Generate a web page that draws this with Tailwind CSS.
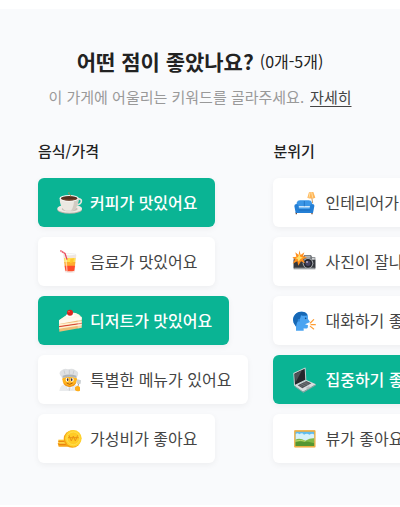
<!DOCTYPE html>
<html lang="ko">
<head>
<meta charset="utf-8">
<meta name="viewport" content="width=device-width, initial-scale=1">
<title>어떤 점이 좋았나요?</title>
<script src="https://cdn.jsdelivr.net/npm/@tailwindcss/browser@4"></script>
</head>
<body class="bg-white font-['Noto_Sans_CJK_KR',sans-serif] text-[#222]">
<main class="mt-[9px] overflow-hidden bg-[#f9fafc] pt-9 pb-[42px]">
  <header class="text-center whitespace-nowrap">
    <h1 class="flex items-center justify-center gap-[6px] text-[21px] leading-8 font-bold">어떤 점이 좋았나요? <span class="text-base font-normal">(0개-5개)</span></h1>
    <p class="mt-1 flex items-center justify-center gap-[6px] text-[15px] leading-8 text-[#999]">이 가게에 어울리는 키워드를 골라주세요. <a href="#" class="text-[#444] underline underline-offset-3">자세히</a></p>
  </header>
  <div class="mt-6 ml-[38px] flex gap-[25px] whitespace-nowrap">
    <section class="shrink-0" aria-labelledby="food">
      <h2 id="food" class="text-[15px] leading-7 font-medium">음식/가격</h2>
      <ul class="mt-[13px] flex flex-col items-start gap-[10px]">
        <li><button type="button" aria-pressed="true" class="flex h-[49px] items-center gap-[7px] rounded-md bg-[#0ab494] pr-[17px] pl-[19px] text-base font-medium text-white shadow-[0_2px_6px_rgba(0,0,0,0.05)]">
          <svg class="size-[26px]" viewBox="0 0 78 78" aria-hidden="true"><ellipse cx="38" cy="59" rx="37" ry="12" fill="#b9b1a7"/><ellipse cx="38" cy="56" rx="37" ry="12" fill="#eeeae4"/><ellipse cx="38" cy="57" rx="24" ry="7" fill="#c9c1b7"/><path d="M60 28c18-7 18 15-2 17" fill="none" stroke="#e8e4de" stroke-width="5"/><path d="M8 25c0 18 7 33 18 37h21c11-5 18-20 18-37z" fill="#ece8e2"/><path d="M51 31c0 13-3 23-9 31h5c11-5 18-20 18-37z" fill="#d2cbc2"/><ellipse cx="36.500" cy="25" rx="29" ry="10" fill="#f9f7f4"/><ellipse cx="36.500" cy="25" rx="25" ry="7" fill="#53301f"/><path d="M18 27c9 4 27 4 37 0" stroke="#8a5437" stroke-width="2" fill="none"/><path d="M41 19c2-5-9-6-5-12" stroke="#bc863f" stroke-width="3" fill="none"/></svg>
          <span class="pb-[2px]">커피가 맛있어요</span></button></li>
        <li><button type="button" aria-pressed="false" class="flex h-[49px] items-center gap-[7px] rounded-md bg-white pr-[17px] pl-[19px] text-base text-[#444] shadow-[0_2px_6px_rgba(0,0,0,0.05)]">
          <svg class="size-[26px]" viewBox="0 0 78 78" aria-hidden="true"><path d="M19 17h39l-5 53q-14 4-29 0z" fill="#f3e5df"/><path d="M21 27h35l-2 16H23z" fill="#ffe052"/><path d="M22 39h33l-2 16H24z" fill="#ffac2f"/><path d="M23 50h31l-2 15q-13 3-27 0z" fill="#ff4c2b"/><path d="M26 21l4 45" stroke="#fff" stroke-opacity=".55" stroke-width="4"/><path d="M40 30l11-2-2 11-10 4z" fill="#ffc72e"/><ellipse cx="38" cy="17" rx="19" ry="3" fill="#fff" stroke="#dedede" stroke-width="1.500"/><path d="M10 5l14 8 6 19" fill="none" stroke="#e9475a" stroke-width="4"/><path d="M15 5l-2 5m8 0l-3 4" stroke="#ffd0d4" stroke-width="2"/></svg>
          <span class="pb-[2px]">음료가 맛있어요</span></button></li>
        <li><button type="button" aria-pressed="true" class="flex h-[49px] items-center gap-[7px] rounded-md bg-[#0ab494] pr-[17px] pl-[19px] text-base font-medium text-white shadow-[0_2px_6px_rgba(0,0,0,0.05)]">
          <svg class="size-[26px]" viewBox="0 0 78 78" aria-hidden="true"><path d="M6 37l32-22q27-4 36 16v28L7 71z" fill="#eebf77"/><path d="M6 37l32-22q27-4 36 16L6 46z" fill="#fff6e9"/><path d="M6 38l68-12v9L6 48z" fill="#fffaf0"/><path d="M6 53l68-10v5L6 59z" fill="#d84b38"/><path d="M6 49l68-9v4L6 54zM6 58l68-10v4L6 62z" fill="#fff1d2"/><path d="M62 30l12-4v33l-12 3z" fill="#fff" fill-opacity=".3"/><ellipse cx="40" cy="22" rx="13" ry="5" fill="#fff"/><circle cx="39" cy="14" r="9" fill="#dc251f"/><circle cx="36" cy="11" r="2" fill="#ff877d"/></svg>
          <span class="pb-[2px]">디저트가 맛있어요</span></button></li>
        <li><button type="button" aria-pressed="false" class="flex h-[49px] items-center gap-[7px] rounded-md bg-white pr-[17px] pl-[19px] text-base text-[#444] shadow-[0_2px_6px_rgba(0,0,0,0.05)]">
          <svg class="size-[26px]" viewBox="0 0 78 78" aria-hidden="true"><path d="M7 72q2-20 20-21h22q16 3 18 21z" fill="#e9ebed"/><path d="M37 57v14" stroke="#b5babd" stroke-width="2"/><circle cx="38" cy="37" r="22" fill="#ffb51f"/><path d="M18 46q20 20 40 0-5 14-20 14T18 46" fill="#f39314"/><path d="M14 30Q1 18 14 10q8-8 19-3 13-5 21 2 16 6 6 21v4q-23-8-45 0z" fill="#dfe1e3"/><path d="M17 26q21-7 41 0v7q-20-7-41 0z" fill="#aeb3b7"/><path d="M21 10l3 12m13-13v12m14-11l-3 12" stroke="#bfc3c6" stroke-width="2"/><ellipse cx="31" cy="38" rx="5" ry="6" fill="#fff"/><ellipse cx="45" cy="38" rx="5" ry="6" fill="#fff"/><ellipse cx="32" cy="38" rx="2.500" ry="4" fill="#422f21"/><ellipse cx="44" cy="38" rx="2.500" ry="4" fill="#422f21"/><path d="M29 48q9 8 18 0" fill="none" stroke="#9c4c10" stroke-width="2.500"/><path d="M28 58l10 4 9-4-1 9-8-4-8 4z" fill="#fff" stroke="#c9cdd0"/><path d="M62 60l5-15" stroke="#9ba1a5" stroke-width="3"/><path d="M61 37l11 3-1 10-10 2-3-7z" fill="#cbd0d3"/><path d="M54 61q9-8 15 0v10q-9 4-15-2z" fill="#ffae1b"/></svg>
          <span class="pb-[2px]">특별한 메뉴가 있어요</span></button></li>
        <li><button type="button" aria-pressed="false" class="flex h-[49px] items-center gap-[7px] rounded-md bg-white pr-[17px] pl-[19px] text-base text-[#444] shadow-[0_2px_6px_rgba(0,0,0,0.05)]">
          <svg class="size-[26px]" viewBox="0 0 78 78" aria-hidden="true"><path d="M4 41h28v10H4z" fill="#ffc52c"/><path d="M2 51h33v11H5z" fill="#f7a51a"/><path d="M4 46h24M5 55h26" stroke="#e77d0d" stroke-width="3"/><path d="M7 51h24" stroke="#ffe265" stroke-width="3"/><circle cx="46" cy="39" r="26" fill="#f5a313"/><circle cx="49" cy="37" r="25" fill="#ffd22e"/><circle cx="49" cy="37" r="19" fill="#ffcb25" stroke="#ffe463" stroke-width="2"/><path d="M36 28l7 17 6-15 6 15 7-17M33 35h32" fill="none" stroke="#eb9516" stroke-width="3"/></svg>
          <span class="pb-[2px]">가성비가 좋아요</span></button></li>
      </ul>
    </section>
    <section class="shrink-0" aria-labelledby="mood">
      <h2 id="mood" class="text-[15px] leading-7 font-medium">분위기</h2>
      <ul class="mt-[13px] flex flex-col items-start gap-[10px]">
        <li><button type="button" aria-pressed="false" class="flex h-[49px] items-center gap-[7px] rounded-md bg-white pr-[17px] pl-[19px] text-base text-[#444] shadow-[0_2px_6px_rgba(0,0,0,0.05)]">
          <svg class="size-[26px]" viewBox="0 0 78 78" aria-hidden="true"><path d="M59 20l3 20" stroke="#c69b68" stroke-width="3"/><path d="M51 7l13-1 6 17q-12 5-24 0z" fill="#ffb457"/><path d="M54 8l-3 15m8-16l3 16" stroke="#ffe1a2" stroke-width="3"/><path d="M13 66v7m47-7v7" stroke="#744b34" stroke-width="4"/><path d="M14 49V38q2-7 10-7h26q8 0 10 7v11z" fill="#3a96e7"/><path d="M20 52h35v10H20z" fill="#53a9ef"/><path d="M7 48q0-6 7-6 7 1 7 14h32q0-13 7-14 8 0 7 7l-4 20H11z" fill="#247fd5"/><path d="M20 60h35M37 33v16" stroke="#1767b5" stroke-width="2"/></svg>
          <span class="pb-[2px]">인테리어가 멋져요</span></button></li>
        <li><button type="button" aria-pressed="false" class="flex h-[49px] items-center gap-[7px] rounded-md bg-white pr-[17px] pl-[19px] text-base text-[#444] shadow-[0_2px_6px_rgba(0,0,0,0.05)]">
          <svg class="size-[26px]" viewBox="0 0 78 78" aria-hidden="true"><path d="M5 25h27l5-7h20l4 7h9v36H5z" fill="#73777b"/><path d="M5 32h65v25H5z" fill="#35383d"/><path d="M7 56h61v4H7z" fill="#999da0"/><path d="M39 20h16v6H38z" fill="#b1b5b8"/><path d="M60 27h8v5h-8z" fill="#d3d5d7"/><circle cx="48" cy="43" r="16" fill="#a9adb1"/><circle cx="48" cy="43" r="13" fill="#25272e"/><circle cx="48" cy="43" r="8" fill="#484461"/><circle cx="45" cy="39" r="3" fill="#b3accc"/><path d="M22 4l4 14 11-8-4 12 12 3-12 6 6 12-12-6-8 13-3-13-14 7 7-13-8-6 12-2-3-13 10 8z" fill="#ff8f1e"/><path d="M22 14l3 9 8 3-8 4-5 8-3-8-7-2 8-4z" fill="#ffe16b"/></svg>
          <span class="pb-[2px]">사진이 잘나와요</span></button></li>
        <li><button type="button" aria-pressed="false" class="flex h-[49px] items-center gap-[7px] rounded-md bg-white pr-[17px] pl-[19px] text-base text-[#444] shadow-[0_2px_6px_rgba(0,0,0,0.05)]">
          <svg class="size-[26px]" viewBox="0 0 78 78" aria-hidden="true"><path d="M12 68V55Q-1 42 5 26q8-16 25-15 15 1 18 14v8l6 9-6 3-9 4 9 3-1 8q-5 3-12 1v7z" fill="#4ba4f1"/><path d="M12 56Q-1 42 5 26q8-16 25-15 14 1 17 11-10 3-20 0-2 13-9 17-5 6-6 17" fill="#1768b5"/><path d="M23 33q-8-1-5 6 2 4 6 1" fill="#2e88dc"/><circle cx="41" cy="31" r="2.500" fill="#174c86"/><path d="M55 45l10-10M57 50h13M55 55l10 8" fill="none" stroke="#ff9c32" stroke-width="3.500" stroke-linecap="round"/></svg>
          <span class="pb-[2px]">대화하기 좋아요</span></button></li>
        <li><button type="button" aria-pressed="true" class="flex h-[49px] items-center gap-[7px] rounded-md bg-[#0ab494] pr-[17px] pl-[19px] text-base font-medium text-white shadow-[0_2px_6px_rgba(0,0,0,0.05)]">
          <svg class="size-[26px]" viewBox="0 0 78 78" aria-hidden="true"><path d="M4 18L38 2q3-1 3 3l2 35L9 57q-3 0-3-3z" fill="#ced3d6"/><path d="M7 20L38 5l2 33L9 53z" fill="#25282c"/><path d="M8 21l22-11-19 36z" fill="#4d5155"/><path d="M8 56l35-17 29 13-39 22z" fill="#d9dddf"/><path d="M8 56l25 18 39-22v3L34 77 8 59z" fill="#999fa3"/><path d="M17 55l26-13 15 7-27 15z" fill="#4c5055"/><path d="M22 57l26-13M27 60l26-13M27 50l16 9M35 46l15 8" stroke="#93989c" stroke-width="1"/><path d="M41 63l9-5 7 3-10 5z" fill="#b6bbbf"/></svg>
          <span class="pb-[2px]">집중하기 좋아요</span></button></li>
        <li><button type="button" aria-pressed="false" class="flex h-[49px] items-center gap-[7px] rounded-md bg-white pr-[17px] pl-[19px] text-base text-[#444] shadow-[0_2px_6px_rgba(0,0,0,0.05)]">
          <svg class="size-[26px]" viewBox="0 0 78 78" aria-hidden="true"><path d="M7 13h63v51H7z" fill="#eaa53a"/><path d="M10 17h57v43H10z" fill="#62bced"/><path d="M11 25q5-6 11 0 8-7 14 1 9-6 16 0 9-6 15 0v20H11z" fill="#d7f1fa"/><path d="M10 41q13-7 30 3 15-8 27-7v23H10z" fill="#7fb846"/><path d="M10 49q25-7 57 3v8H10z" fill="#559630"/><path d="M10 45q16-4 30 1" stroke="#c0d969" stroke-width="3" fill="none"/><path d="M8.500 14.500h60v48h-60z" fill="none" stroke="#efb348" stroke-width="3"/></svg>
          <span class="pb-[2px]">뷰가 좋아요</span></button></li>
      </ul>
    </section>
  </div>
</main>
</body>
</html>
